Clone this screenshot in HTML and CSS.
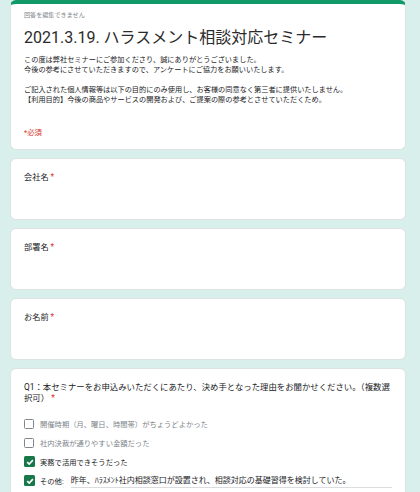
FILE: index.html
```html
<!DOCTYPE html>
<html>
<head>
    <title>2021.3.19. ハラスメント相談対応セミナー</title>
    <link rel="stylesheet" href="styles.css">
</head>
<body>
    <div class="form">
        <div class="card card-head">
            <p class="notice">回答を編集できません</p>
            <h1 class="title">2021.3.19. ハラスメント相談対応セミナー</h1>
            <div class="desc">
                <p>この度は弊社セミナーにご参加くださり、誠にありがとうございました。<br>今後の参考にさせていただきますので、アンケートにご協力をお願いいたします。</p>
                <p>ご記入された個人情報等は以下の目的にのみ使用し、お客様の同意なく第三者に提供いたしません。<br>【利用目的】今後の商品やサービスの開発および、ご提案の際の参考とさせていただくため。</p>
            </div>
            <p class="required">*必須</p>
        </div>

        <div class="card question">
            <div class="q-label">会社名 <span class="star">*</span></div>
        </div>

        <div class="card question">
            <div class="q-label">部署名 <span class="star">*</span></div>
        </div>

        <div class="card question">
            <div class="q-label">お名前 <span class="star">*</span></div>
        </div>

        <div class="card question choices">
            <div class="q-label">Q1：本セミナーをお申込みいただくにあたり、決め手となった理由をお聞かせください。（複数選択可） <span class="star">*</span></div>
            <ul class="options">
                <li class="option">
                    <span class="box"></span>
                    <span class="opt-text">開催時期（月、曜日、時間帯）がちょうどよかった</span>
                </li>
                <li class="option">
                    <span class="box"></span>
                    <span class="opt-text">社内決裁が通りやすい金額だった</span>
                </li>
                <li class="option checked">
                    <span class="box"><svg viewBox="0 0 10 10" width="10" height="10"><polyline points="2.2,5.2 4.2,7.1 7.9,3.1" fill="none" stroke="#fff" stroke-width="1.6"/></svg></span>
                    <span class="opt-text">実務で活用できそうだった</span>
                </li>
                <li class="option checked">
                    <span class="box"><svg viewBox="0 0 10 10" width="10" height="10"><polyline points="2.2,5.2 4.2,7.1 7.9,3.1" fill="none" stroke="#fff" stroke-width="1.6"/></svg></span>
                    <span class="opt-text">その他:</span>
                    <span class="other-input">昨年、ﾊﾗｽﾒﾝﾄ社内相談窓口が設置され、相談対応の基礎習得を検討していた。</span>
                </li>
            </ul>
        </div>
    </div>
</body>
</html>
```

FILE: styles.css
```css
body {
    font-family: Roboto, "Noto Sans CJK JP", sans-serif;
    background-color: #d8efeb;
    color: #202124;
    margin: 0;
    padding: 0 14px 0 10px;
}
.form {
    display: flex;
    flex-direction: column;
    gap: 8px;
}
.card {
    background-color: #fff;
    border: 1px solid #dde3e1;
    border-radius: 6px;
    padding: 13px 13px;
}
.card-head {
    border-top: 4px solid #12996a;
    padding-top: 7px;
    padding-bottom: 11px;
}
.notice {
    margin: 0;
    font-size: 6.1px;
    line-height: 8px;
    color: #80868b;
}
.title {
    margin: 8px 0 0;
    font-size: 16px;
    line-height: 22px;
    font-weight: normal;
    color: #2b2b2b;
}
.desc {
    margin-top: 6px;
    font-size: 7.2px;
    line-height: 10px;
    color: #202124;
}
.desc p {
    margin: 0 0 10px;
}
.desc p:last-child {
    margin-bottom: 0;
}
.required {
    margin: 23px 0 0;
    font-size: 7.4px;
    line-height: 10px;
    color: #d93025;
}
.question {
    height: 34px;
}
.choices {
    height: auto;
}
.q-label {
    font-size: 8.2px;
    line-height: 11px;
}
.choices .q-label {
    font-size: 8.4px;
}
.star {
    color: #d93025;
}
.options {
    list-style: none;
    margin: 10px 0 0;
    padding: 0;
}
.option {
    display: flex;
    align-items: center;
    height: 19px;
    font-size: 7.3px;
    color: #80868b;
}
.box {
    width: 10px;
    height: 10px;
    box-sizing: border-box;
    border: 1.5px solid #80868b;
    border-radius: 1.5px;
    margin-right: 6px;
    display: flex;
    align-items: center;
    justify-content: center;
}
.checked {
    color: #202124;
}
.checked .box {
    width: 11px;
    height: 11px;
    border: none;
    background-color: #17784a;
    margin-right: 5px;
}
.other-input {
    flex: 1;
    margin-left: 7px;
    font-size: 8px;
    padding-bottom: 2px;
    border-bottom: 1px solid #dadce0;
}
```
